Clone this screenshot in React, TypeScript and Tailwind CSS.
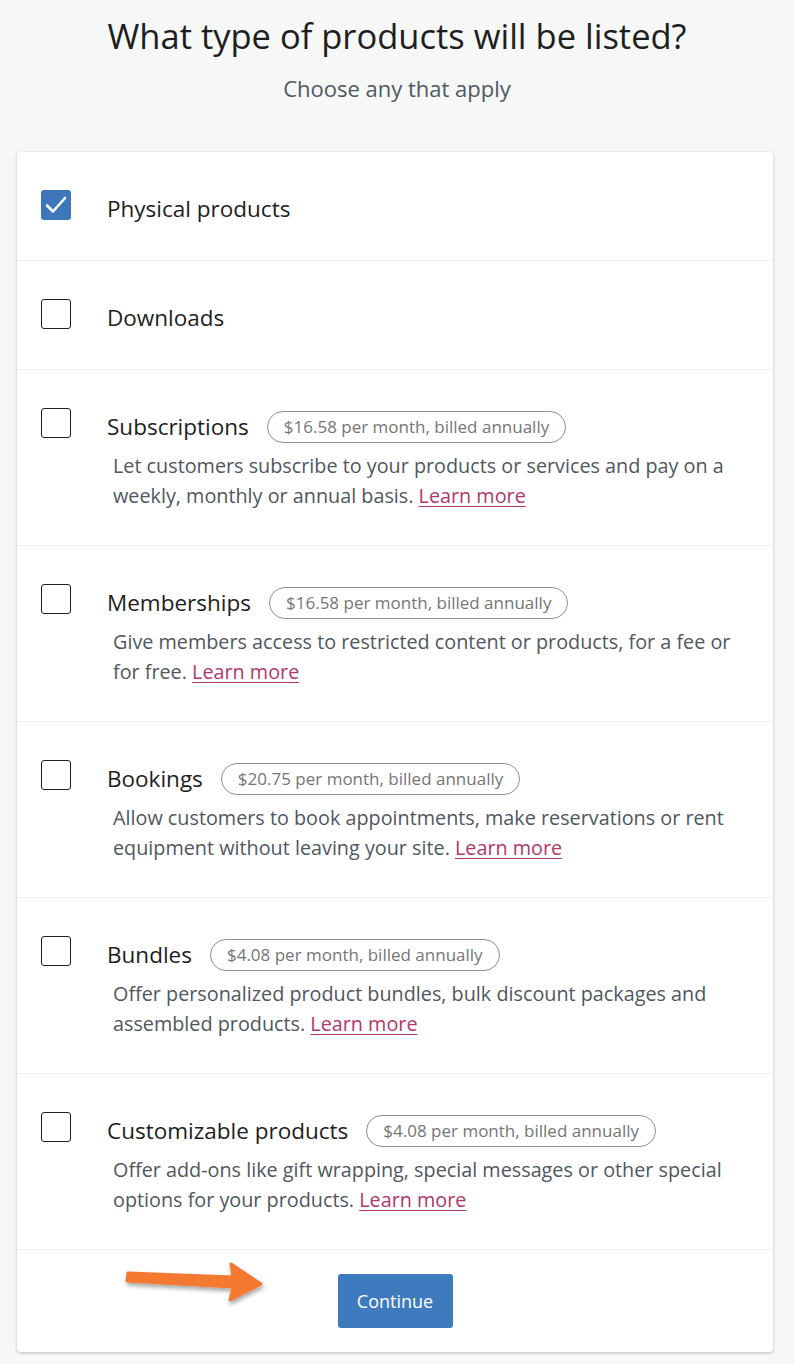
import React from "react";

type Option = {
  label: string;
  price?: string;
  description?: string;
  checked?: boolean;
};

const OPTIONS: Option[] = [
  { label: "Physical products", checked: true },
  { label: "Downloads" },
  {
    label: "Subscriptions",
    price: "$16.58 per month, billed annually",
    description: "Let customers subscribe to your products or services and pay on a weekly, monthly or annual basis.",
  },
  {
    label: "Memberships",
    price: "$16.58 per month, billed annually",
    description: "Give members access to restricted content or products, for a fee or for free.",
  },
  {
    label: "Bookings",
    price: "$20.75 per month, billed annually",
    description: "Allow customers to book appointments, make reservations or rent equipment without leaving your site.",
  },
  {
    label: "Bundles",
    price: "$4.08 per month, billed annually",
    description: "Offer personalized product bundles, bulk discount packages and assembled products.",
  },
  {
    label: "Customizable products",
    price: "$4.08 per month, billed annually",
    description: "Offer add-ons like gift wrapping, special messages or other special options for your products.",
  },
];

function Checkbox({ checked }: { checked?: boolean }) {
  if (checked) {
    return (
      <div className="flex h-[30px] w-[30px] shrink-0 items-center justify-center rounded-[3px] bg-[#3d77b9]">
        <svg width="24" height="24" viewBox="0 0 24 24" fill="none">
          <path d="M3 12.5l6 6L21 5" stroke="white" strokeWidth="2.6" strokeLinecap="round" strokeLinejoin="round" />
        </svg>
      </div>
    );
  }
  return <div className="h-[30px] w-[30px] shrink-0 rounded-[3px] border-[1.5px] border-[#1e1e1e] bg-white" />;
}

function OptionRow({ option }: { option: Option }) {
  return (
    <div className={`flex gap-9 border-b border-[#f0f0f0] px-6 pt-[38px] ${option.description ? "pb-[34px]" : "pb-[32px]"}`}>
      <Checkbox checked={option.checked} />
      <div className="flex flex-col">
        <div className="flex h-[38px] items-center gap-[18px]">
          <span className="text-[22.5px] text-[#1e1e1e]">{option.label}</span>
          {option.price && (
            <span className="rounded-full border border-[#8c8f94] px-4 py-[2px] text-[17px] text-[#757575]">
              {option.price}
            </span>
          )}
        </div>
        {option.description && (
          <p className="mt-[5px] pl-[6px] text-[19.8px] leading-[30px] text-[#50575e]">
            {option.description}{" "}
            <a href="#" className="text-[#b0386a] underline underline-offset-[3px]">
              Learn more
            </a>
          </p>
        )}
      </div>
    </div>
  );
}

function Arrow() {
  return (
    <svg className="absolute left-[92px] top-[5px]" width="160" height="52" viewBox="0 0 160 52">
      <defs>
        <filter id="sh" x="-10%" y="-30%" width="130%" height="170%">
          <feDropShadow dx="1" dy="3" stdDeviation="2" floodColor="#000" floodOpacity="0.35" />
        </filter>
      </defs>
      <path
        d="M19 18 L124 22 L122 9 L152 29 L121 45 L124 32 L18 26 Z"
        fill="#f47a33"
        filter="url(#sh)"
        strokeLinejoin="round"
        stroke="#f47a33"
        strokeWidth="3"
      />
    </svg>
  );
}

export default function App() {
  return (
    <div className="min-h-screen bg-[#f6f7f7] pb-4 font-['Open_Sans',sans-serif]">
      <h1 className="pt-[12px] text-center text-[34.5px] leading-[48px] text-[#1e1e1e]">
        What type of products will be listed?
      </h1>
      <p className="mt-[13px] text-center text-[22px] leading-[30px] text-[#50575e]">Choose any that apply</p>
      <div className="ml-[17px] mr-[21px] mt-[49px] overflow-hidden rounded-[4px] bg-white shadow-[0_1px_3px_rgba(0,0,0,0.25)]">
        {OPTIONS.map((o) => (
          <OptionRow key={o.label} option={o} />
        ))}
        <div className="relative flex h-[102px] items-center justify-center">
          <Arrow />
          <button className="h-[54px] w-[115px] rounded-[3px] bg-[#3e7bbe] text-[18px] text-white">Continue</button>
        </div>
      </div>
    </div>
  );
}
